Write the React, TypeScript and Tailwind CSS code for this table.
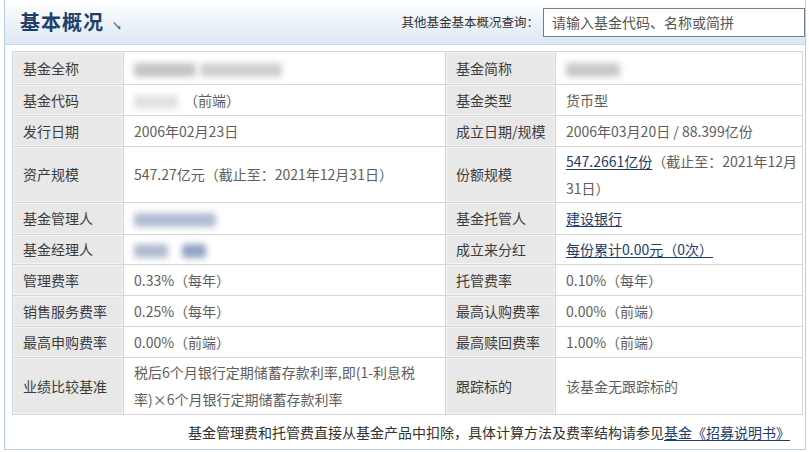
const rows: {
  l1: string;
  v1: React.ReactNode;
  l2: string;
  v2: React.ReactNode;
  h: string;
}[] = [];

function Blur({ w, color, ml = 0 }: { w: number; color: string; ml?: number }) {
  return (
    <span
      className="inline-block h-[14px] align-middle rounded-[3px] blur-[3px]"
      style={{ width: w, background: color, marginLeft: ml }}
    />
  );
}

const Link = ({ children }: { children: React.ReactNode }) => (
  <span className="text-[#1d3b6b] underline underline-offset-2">{children}</span>
);

rows.push(
  {
    l1: "基金全称",
    v1: (
      <span>
        <Blur w={62} color="#c4c4c4" />
        <Blur w={82} color="#cfcfcf" ml={4} />
      </span>
    ),
    l2: "基金简称",
    v2: <Blur w={54} color="#c8c8c8" />,
    h: "h-[33px]",
  },
  {
    l1: "基金代码",
    v1: (
      <span>
        <Blur w={44} color="#e2e2e2" />
        <span className="ml-[6px]">（前端）</span>
      </span>
    ),
    l2: "基金类型",
    v2: "货币型",
    h: "h-[31px]",
  },
  {
    l1: "发行日期",
    v1: "2006年02月23日",
    l2: "成立日期/规模",
    v2: "2006年03月20日 / 88.399亿份",
    h: "h-[31px]",
  },
  {
    l1: "资产规模",
    v1: "547.27亿元（截止至：2021年12月31日）",
    l2: "份额规模",
    v2: (
      <span>
        <Link>547.2661亿份</Link>（截止至：2021年12月31日）
      </span>
    ),
    h: "h-[56px]",
  },
  {
    l1: "基金管理人",
    v1: <Blur w={82} color="#b0bcd3" />,
    l2: "基金托管人",
    v2: <Link>建设银行</Link>,
    h: "h-[32px]",
  },
  {
    l1: "基金经理人",
    v1: (
      <span>
        <Blur w={34} color="#b0bbd0" />
        <Blur w={24} color="#93a3c4" ml={14} />
      </span>
    ),
    l2: "成立来分红",
    v2: <Link>每份累计0.00元（0次）</Link>,
    h: "h-[30px]",
  },
  {
    l1: "管理费率",
    v1: "0.33%（每年）",
    l2: "托管费率",
    v2: "0.10%（每年）",
    h: "h-[31px]",
  },
  {
    l1: "销售服务费率",
    v1: "0.25%（每年）",
    l2: "最高认购费率",
    v2: "0.00%（前端）",
    h: "h-[31px]",
  },
  {
    l1: "最高申购费率",
    v1: "0.00%（前端）",
    l2: "最高赎回费率",
    v2: "1.00%（前端）",
    h: "h-[31px]",
  },
  {
    l1: "业绩比较基准",
    v1: "税后6个月银行定期储蓄存款利率,即(1-利息税率)×6个月银行定期储蓄存款利率",
    l2: "跟踪标的",
    v2: "该基金无跟踪标的",
    h: "h-[57px]",
  }
);

export default function App() {
  return (
    <div
      className="w-[809px] h-[452px] bg-white overflow-hidden text-[14px] text-[#5e5e5e]"
      style={{ fontFamily: '"Noto Sans CJK SC", "Liberation Sans", sans-serif' }}
    >
      <div className="ml-[4px] mr-[3px] h-[450px] border-l border-r border-b border-[#b5cde4] flex flex-col">
        {/* header */}
        <div className="h-[45px] shrink-0 flex items-center justify-between border-b border-[#c6d9ec] bg-gradient-to-b from-white to-[#dbe8f4] pl-[15px] pr-0">
          <div className="flex items-end">
            <span className="text-[20px] font-bold text-[#1f4068] leading-none tracking-[1px]">基本概况</span>
            <span className="ml-[8px] text-[10px] text-[#1f4068] leading-none mb-[1px]">↘</span>
          </div>
          <div className="flex items-center">
            <span className="text-[12.5px] text-[#333] mr-[4px]">其他基金基本概况查询：</span>
            <div className="w-[262px] h-[29px] bg-white border border-[#6f7f8f] flex items-center pl-[8px] text-[14px] text-[#555]">
              请输入基金代码、名称或简拼
            </div>
          </div>
        </div>
        {/* table */}
        <div className="px-[7px] pt-[6px]">
          <table className="w-[790px] border-collapse table-fixed">
            <colgroup>
              <col className="w-[111px]" />
              <col className="w-[322px]" />
              <col className="w-[110px]" />
              <col className="w-[247px]" />
            </colgroup>
            <tbody>
              {rows.map((r, i) => (
                <tr key={i} className={r.h}>
                  <td className="bg-[#e8e8e8] border border-[#d6d6d6] shadow-[inset_0_0_0_1px_#f4f4f4] pl-[10px] text-[#3c3c3c] leading-[27px]">
                    {r.l1}
                  </td>
                  <td className="border border-[#d6d6d6] pl-[10px] pr-[6px] leading-[27px]">{r.v1}</td>
                  <td className="bg-[#e8e8e8] border border-[#d6d6d6] shadow-[inset_0_0_0_1px_#f4f4f4] pl-[10px] text-[#3c3c3c] leading-[27px]">
                    {r.l2}
                  </td>
                  <td className="border border-[#d6d6d6] pl-[10px] pr-[2px] leading-[27px]">{r.v2}</td>
                </tr>
              ))}
            </tbody>
          </table>
          <div className="h-[34px] flex items-center justify-end pr-[8px] text-[#333]">
            基金管理费和托管费直接从基金产品中扣除，具体计算方法及费率结构请参见
            <Link>基金《招募说明书》</Link>
          </div>
        </div>
      </div>
    </div>
  );
}
